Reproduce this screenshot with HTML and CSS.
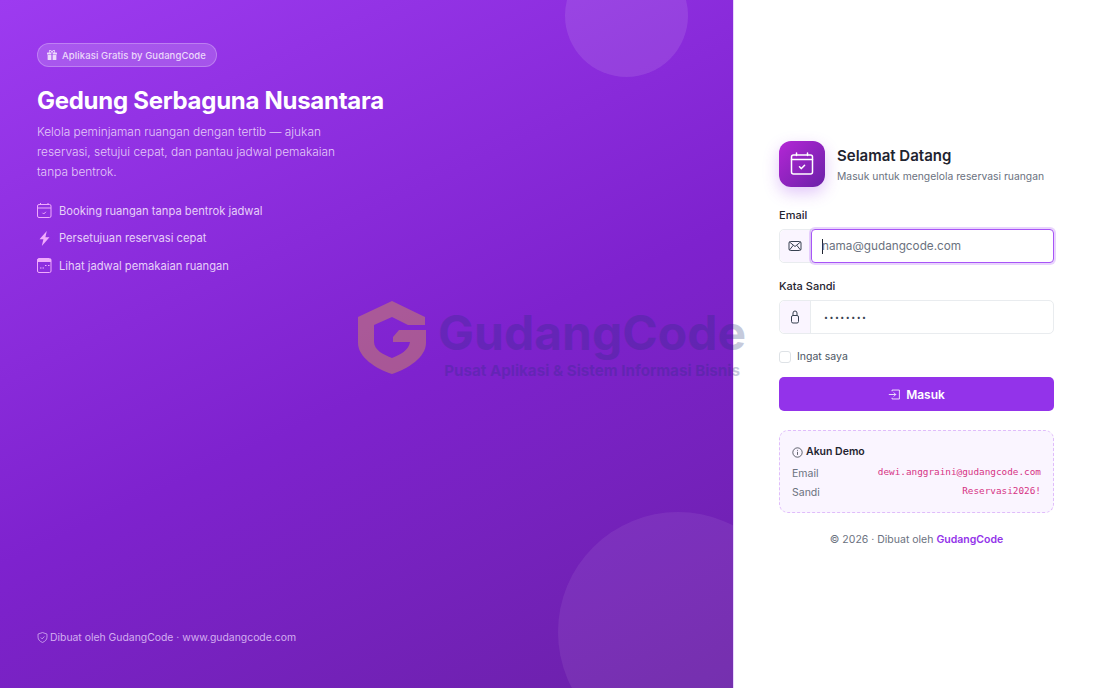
FILE: index.html
```html
<!DOCTYPE html>
<html lang="id">
<head>
    <meta charset="UTF-8">
    <title>Masuk - Gedung Serbaguna Nusantara</title>
    <link rel="stylesheet" href="styles.css">
</head>
<body>
    <div class="login-page">
        <section class="hero">
            <div class="hero-circle circle-top"></div>
            <div class="hero-circle circle-bottom"></div>
            <div class="hero-badge">
                <svg class="badge-icon" viewBox="0 0 16 16" fill="currentColor"><path d="M3 1.800C3 .8 3.800 0 4.800 0c1.400 0 2.500.9 3.200 2.100C8.700.9 9.800 0 11.200 0c1 0 1.800.8 1.800 1.800 0 .9-.3 1.600-.8 2.200H15a1 1 0 0 1 1 1v2H9V4H7v3H0V5a1 1 0 0 1 1-1h2.800C3.300 3.400 3 2.700 3 1.800zM4.800 1.200a.6.6 0 0 0-.6.600c0 1.100.8 2.100 2.800 2.200-.3-1.500-1.100-2.800-2.200-2.800zm6.400 0C10.100 1.200 9.300 2.500 9 4c2-.1 2.800-1.100 2.800-2.200a.6.6 0 0 0-.6-.6zM1 8h6v8H2a1 1 0 0 1-1-1V8zm8 0h6v7a1 1 0 0 1-1 1H9V8z"/></svg>
                Aplikasi Gratis by GudangCode
            </div>
            <h1 class="hero-title">Gedung Serbaguna Nusantara</h1>
            <p class="hero-text">Kelola peminjaman ruangan dengan tertib — ajukan reservasi, setujui cepat, dan pantau jadwal pemakaian tanpa bentrok.</p>
            <ul class="hero-list">
                <li>
                    <svg class="list-icon" viewBox="0 0 15 15" fill="none" stroke="currentColor"><rect x=".5" y="1.500" width="13.500" height="13" rx="1.500"/><path d="M.5 5h13.500M3.500 0v1.500M11 0v1.500M5.500 9.800l1.200 1.200 2.200-2.200"/></svg>
                    Booking ruangan tanpa bentrok jadwal
                </li>
                <li>
                    <svg class="list-icon" viewBox="0 0 15 15" fill="currentColor"><path d="M9.800 0 2.500 8.300h3.900L4.800 15l7.700-8.800H8.400z"/></svg>
                    Persetujuan reservasi cepat
                </li>
                <li>
                    <svg class="list-icon" viewBox="0 0 15 15" fill="none" stroke="currentColor"><rect x=".5" y=".5" width="13.500" height="14" rx="1.500"/><path d="M.5 2.500H14" stroke-width="3"/><path d="M3 10h1.500M5.500 10H7M8 7.500h1.500M11 7.500h1.500" /></svg>
                    Lihat jadwal pemakaian ruangan
                </li>
            </ul>
            <div class="hero-footer">
                <svg class="footer-icon" viewBox="0 0 16 16" fill="none" stroke="currentColor" stroke-width="1.200"><path d="M8 .8 1.500 3v4.500c0 3.700 2.700 6.200 6.500 7.700 3.800-1.500 6.500-4 6.500-7.700V3z"/><path d="m5.500 8 2 2 3.200-3.500"/></svg>
                Dibuat oleh GudangCode · www.gudangcode.com
            </div>
        </section>

        <main class="login-side">
            <div class="login-box">
                <div class="brand">
                    <div class="brand-icon">
                        <svg viewBox="0 0 24 24" fill="none" stroke="#fff" stroke-width="1.500" stroke-linecap="round" stroke-linejoin="round"><rect x="1.500" y="3" width="21" height="19" rx="2"/><path d="M1.500 7.500h21M6.500 1v2.500M17.500 1v2.500M9.500 14.800l1.900 1.800 3.200-3.400" /></svg>
                    </div>
                    <div class="brand-text">
                        <h2 class="brand-title">Selamat Datang</h2>
                        <p class="brand-sub">Masuk untuk mengelola reservasi ruangan</p>
                    </div>
                </div>

                <label class="field-label">Email</label>
                <div class="input-group is-focus">
                    <span class="input-addon">
                        <svg viewBox="0 0 14 14" fill="none" stroke="currentColor"><rect x="1" y="2.500" width="12" height="9" rx="1.500"/><path d="m1.500 3 5.500 4.500L12.500 3M1.500 11l3.800-4.800M12.500 11 8.700 6.200"/></svg>
                    </span>
                    <div class="input-box"><span class="caret"></span><span class="placeholder">nama@gudangcode.com</span></div>
                </div>

                <label class="field-label label-gap">Kata Sandi</label>
                <div class="input-group">
                    <span class="input-addon">
                        <svg viewBox="0 0 14 14" fill="none" stroke="currentColor"><rect x="3.500" y="5.500" width="7" height="7.500" rx="1.500"/><path d="M5 5.500V3a2 2 0 0 1 4 0v2.500"/></svg>
                    </span>
                    <div class="input-box password">••••••••</div>
                </div>

                <div class="remember">
                    <span class="checkbox"></span>
                    Ingat saya
                </div>

                <button class="btn-login" type="button">
                    <svg viewBox="0 0 16 16" fill="none" stroke="currentColor"><path d="M5 4V2.500h9v11H5V12M1 8h8.500M7 5.500 9.500 8 7 10.500"/></svg>
                    Masuk
                </button>

                <div class="demo-box">
                    <div class="demo-title">
                        <svg viewBox="0 0 16 16" fill="none" stroke="currentColor"><circle cx="8" cy="8" r="6.800"/><path d="M8 7v4.500M8 4.200v1.300"/></svg>
                        Akun Demo
                    </div>
                    <div class="demo-row"><span>Email</span><code>dewi.anggraini@gudangcode.com</code></div>
                    <div class="demo-row"><span>Sandi</span><code>Reservasi2026!</code></div>
                </div>

                <p class="copyright">© 2026 · Dibuat oleh <a href="#">GudangCode</a></p>
            </div>
        </main>
    </div>

    <div class="watermark">
        <svg class="watermark-logo" viewBox="0 0 68 74"><path d="M34 0 67 16v8H50L34 16 16 24v17c0 8 10 13 18 16 8-3 17-8 18-16H35v-5l6-7h27v13C68 56 50 68 34 73 18 68 0 56 0 42V16z"/></svg>
        <div class="watermark-text">
            <div class="watermark-name">GudangCode</div>
            <div class="watermark-sub">Pusat Aplikasi &amp; Sistem Informasi Bisnis</div>
        </div>
    </div>
</body>
</html>
```

FILE: styles.css
```css
* {
    box-sizing: border-box;
}

body {
    margin: 0;
    background: #fff;
    font-family: Inter, "Liberation Sans", sans-serif;
    color: #1f2937;
    overflow: hidden;
}

.login-page {
    display: flex;
    height: 688px;
}

/* left panel */
.hero {
    position: relative;
    display: flex;
    flex-direction: column;
    width: 733px;
    padding: 43px 37px 44px;
    overflow: hidden;
    color: #fff;
    background: linear-gradient(155deg, #9d3bf0 0%, #7e22ce 55%, #6b21a8 100%);
    box-shadow: 1px 0 0 #e9d5ff;
}

.hero-circle {
    position: absolute;
    border-radius: 50%;
    background: rgba(255,255,255,0.1);
}

.circle-top {
    top: -46px;
    left: 565px;
    width: 123px;
    height: 123px;
}

.circle-bottom {
    top: 512px;
    left: 558px;
    width: 240px;
    height: 240px;
    background: rgba(255,255,255,0.07);
}

.hero-badge {
    display: flex;
    align-items: center;
    gap: 5px;
    align-self: flex-start;
    height: 24px;
    padding: 0 10px 0 9px;
    border: 1px solid rgba(255,255,255,0.25);
    border-radius: 12px;
    background: rgba(255,255,255,0.16);
    color: #ecd9fb;
    font-size: 9.500px;
    font-weight: 500;
    letter-spacing: 0.1px;
}

.badge-icon {
    width: 10px;
    height: 10px;
}

.hero-title {
    margin: 19px 0 0;
    font-size: 24px;
    line-height: 29px;
    font-weight: 700;
    letter-spacing: -0.28px;
}

.hero-text {
    width: 305px;
    margin: 7px 0 0;
    color: #e3c8f8;
    font-size: 11.880px;
    font-weight: 300;
    line-height: 20px;
}

.hero-list {
    margin: 15px 0 0;
    padding: 0;
    list-style: none;
    color: #e6cff9;
    font-size: 11.200px;
    font-weight: 400;
}

.hero-list li {
    display: flex;
    align-items: center;
    gap: 7px;
    height: 27.500px;
}

.list-icon {
    flex: none;
    width: 15px;
    height: 15px;
    color: #f0abfc;
}

.hero-footer {
    display: flex;
    align-items: center;
    gap: 2px;
    margin-top: auto;
    color: #d3aef0;
    font-size: 10.400px;
}

.footer-icon {
    width: 11px;
    height: 11px;
}

/* right panel */
.login-side {
    display: flex;
    flex: 1;
    align-items: center;
    justify-content: center;
}

.login-box {
    width: 275px;
}

.brand {
    display: flex;
    align-items: center;
    gap: 12px;
    margin-bottom: 22px;
}

.brand-icon {
    display: flex;
    align-items: center;
    justify-content: center;
    width: 46px;
    height: 46px;
    border-radius: 12px;
    background: linear-gradient(135deg, #b426d6, #6b21a8);
    box-shadow: 0 6px 16px rgba(147,51,234,0.28);
}

.brand-icon svg {
    width: 24px;
    height: 24px;
}

.brand-text {
    padding-top: 1px;
}

.brand-title {
    margin: 0;
    color: #1f2430;
    font-size: 15px;
    line-height: 20px;
    font-weight: 600;
}

.brand-sub {
    margin: 3px 0 0;
    color: #6b7280;
    font-size: 10.350px;
    line-height: 14px;
}

.field-label {
    display: block;
    margin-bottom: 7px;
    color: #1f2430;
    font-size: 11px;
    line-height: 13px;
    font-weight: 500;
}

.label-gap {
    margin-top: 17px;
}

.input-group {
    position: relative;
    display: flex;
    height: 34px;
    border: 1px solid #e9ecef;
    border-radius: 5px;
}

.input-addon {
    display: flex;
    align-items: center;
    justify-content: center;
    flex: none;
    width: 31px;
    border-right: 1px solid #e9ecef;
    border-radius: 5px 0 0 5px;
    background: #faf5ff;
    color: #374151;
}

.input-addon svg {
    width: 14px;
    height: 14px;
}

.input-box {
    display: flex;
    flex: 1;
    align-items: center;
    padding-left: 11px;
    color: #6b7280;
    font-size: 11.750px;
}

.is-focus .input-box {
    margin: -1px -1px -1px 0;
    border: 1px solid #a855f7;
    border-radius: 4px;
    box-shadow: 0 0 0 2px rgba(168,85,247,0.25);
    padding-left: 10px;
}

.caret {
    width: 1px;
    height: 15px;
    background: #1f2430;
}

.placeholder {
    margin-left: -1px;
}

.password {
    letter-spacing: 1.500px;
    font-size: 7px;
    padding-left: 13px;
    color: #374151;
}

.remember {
    display: flex;
    align-items: center;
    gap: 6px;
    margin-top: 16px;
    color: #4b5563;
    font-size: 10.500px;
    line-height: 14px;
}

.checkbox {
    width: 12px;
    height: 12px;
    border: 1px solid #dee2e6;
    border-radius: 3px;
    background: #fff;
}

.btn-login {
    display: flex;
    align-items: center;
    justify-content: center;
    gap: 5px;
    width: 100%;
    height: 34px;
    margin-top: 13px;
    border: 0;
    border-radius: 5px;
    background: #9333ea;
    color: #fff;
    font-family: inherit;
    font-size: 12px;
    font-weight: 600;
}

.btn-login svg {
    width: 13px;
    height: 13px;
}

.demo-box {
    margin-top: 19px;
    padding: 14px 12px 10px;
    border: 1px dashed #e0bdfb;
    border-radius: 9px;
    background: #faf5ff;
}

.demo-title {
    display: flex;
    align-items: center;
    gap: 3px;
    margin-bottom: 5px;
    color: #1f2430;
    font-size: 10.500px;
    line-height: 14px;
    font-weight: 600;
}

.demo-title svg {
    width: 11px;
    height: 11px;
}

.demo-row {
    display: flex;
    justify-content: space-between;
    height: 19px;
    color: #6b7280;
    font-size: 10.500px;
    line-height: 19px;
}

.demo-row code {
    margin-top: -2px;
    color: #d63384;
    font-family: "DejaVu Sans Mono", monospace;
    font-size: 9.350px;
}

.copyright {
    margin: 20px 0 0;
    color: #6b7280;
    font-size: 10.500px;
    line-height: 14px;
    text-align: center;
}

.copyright a {
    color: #9333ea;
    font-weight: 600;
    text-decoration: none;
}

/* watermark sits over both panels */
.watermark {
    position: absolute;
    top: 301px;
    left: 358px;
    display: flex;
    gap: 12px;
    pointer-events: none;
}

.watermark-logo {
    width: 68px;
    height: 74px;
    fill: #f4b92e;
    opacity: 0.35;
}

.watermark-text {
    padding-top: 6px;
    color: #1e2f78;
    opacity: 0.25;
    text-align: center;
}

.watermark-name {
    font-size: 48px;
    line-height: 52px;
    font-weight: 700;
}

.watermark-sub {
    margin-top: 3px;
    font-size: 15.200px;
    line-height: 17px;
    font-weight: 700;
}
```
